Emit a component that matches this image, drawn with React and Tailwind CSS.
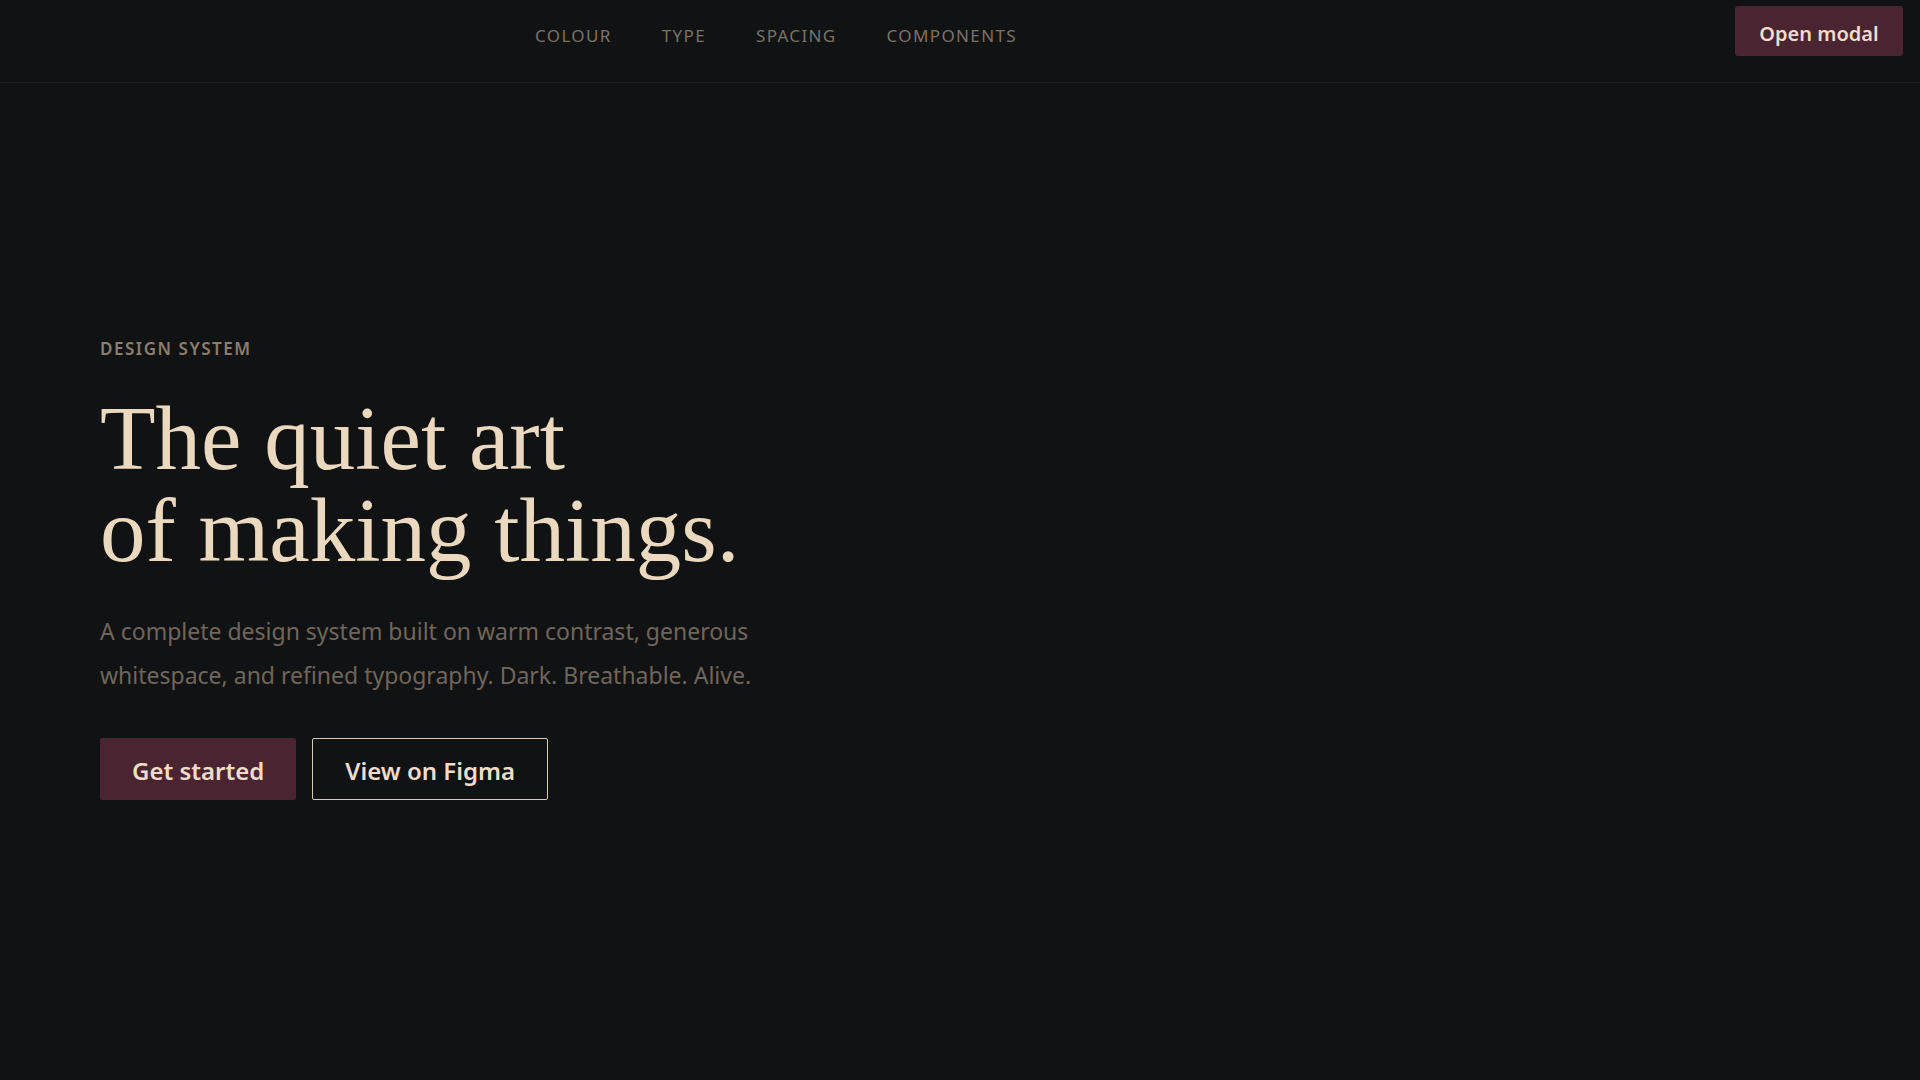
import React from "react";

const NAV = ["Colour", "Type", "Spacing", "Components"];

const sans = "font-['Noto_Sans',sans-serif]";
const serif = "font-['Liberation_Serif',serif]";

export default function App() {
  return (
    <div className={`min-h-screen w-full bg-[#111213] ${sans}`}>
      <header className="flex h-[83px] items-start justify-between border-b border-[#1c1d1e] pl-[535px] pr-[17px]">
        <nav className="flex gap-[50px] pt-[24px]">
          {NAV.map((n) => (
            <a
              key={n}
              href="#"
              className="text-[17px] leading-[24px] uppercase tracking-[0.08em] text-[#7b7266]"
            >
              {n}
            </a>
          ))}
        </nav>
        <button className="mt-[6px] flex h-[50px] w-[168px] items-center justify-center rounded-[3px] bg-[#4a2431] pt-[5px] text-[20px] font-semibold text-[#efdccb]">
          Open modal
        </button>
      </header>

      <main className="px-[100px] pt-[254px]">
        <span className="block text-[17px] leading-[24px] font-semibold uppercase tracking-[0.09em] text-[#8b7e6d]">
          Design system
        </span>
        <h1 className={`${serif} mt-8 text-[91px] leading-[92px] text-[#ead8bf]`}>
          The quiet art
          <br />
          of making things.
        </h1>
        <p className="mt-8 text-[23px] leading-[44px] text-[#6f665b]">
          A complete design system built on warm contrast, generous
          <br />
          whitespace, and refined typography. Dark. Breathable. Alive.
        </p>
        <div className="mt-[41px] flex gap-4">
          <button className="flex h-[62px] items-center rounded-[2px] bg-[#4a2431] px-8 pt-[4px] text-[24px] font-semibold text-[#efdccb]">
            Get started
          </button>
          <button className="flex h-[62px] items-center rounded-[2px] border-[1.5px] border-[#dccbb4] px-8 pt-[4px] text-[24px] font-semibold text-[#efdccb]">
            View on Figma
          </button>
        </div>
      </main>
    </div>
  );
}
